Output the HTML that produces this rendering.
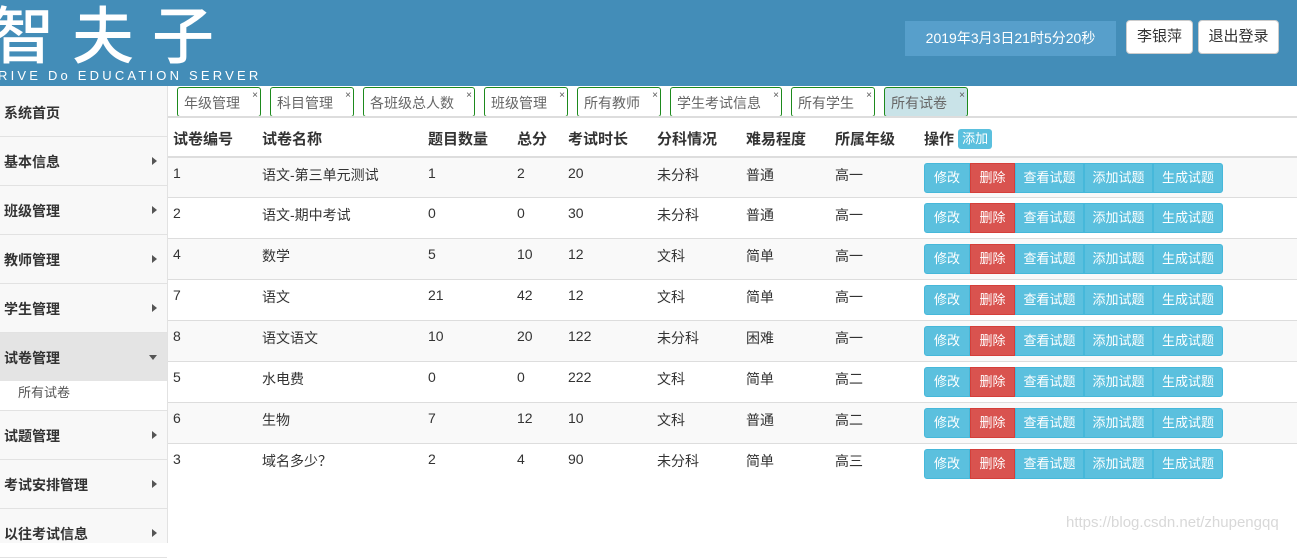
<!DOCTYPE html>
<html><head><meta charset="utf-8"><style>
*{margin:0;padding:0;box-sizing:border-box}
body{width:1297px;height:541px;overflow:hidden;background:#fff;font-family:"Liberation Sans","Noto Sans CJK SC",sans-serif;color:#333;font-size:14px;position:relative}
.hd{position:absolute;left:0;top:0;width:1297px;height:86px;background:#438db8}
.logo{position:absolute;left:-8px;top:-14px;color:#fff;font-size:62px;letter-spacing:18px;font-weight:500;font-family:"Noto Sans CJK SC",sans-serif}
.sub{position:absolute;left:-2px;top:68px;color:#fff;font-size:13px;letter-spacing:3.2px}
.date{position:absolute;left:905px;top:21px;width:211px;height:35px;background:#579fcb;color:#fff;font-size:14px;line-height:35px;text-align:center}
.btn{position:absolute;top:20px;height:34px;background:#fff;border:1px solid #ccc;border-radius:4px;font-size:15px;line-height:32px;text-align:center}
.side{position:absolute;left:0;top:88px;width:168px;height:455px;background:#f8f8f8;border-right:1px solid #e2e2e2}
.sidebg{position:absolute;left:0;top:86px;width:168px;height:3px;background:#f8f8f8;border-right:1px solid #e2e2e2}
.it{height:49px;border-bottom:1px solid #e2e2e2;font-weight:bold;font-size:14px;padding-left:4px;line-height:50px;position:relative;color:#333}
.it i{position:absolute;right:10px;top:20px;width:0;height:0;border-left:5px solid #555;border-top:4px solid transparent;border-bottom:4px solid transparent}
.it.act{background:#e4e4e4;border-bottom:none;height:48px}
.it.act i{border-top:5px solid #555;border-left:4px solid transparent;border-right:4px solid transparent;border-bottom:none;top:22px}
.subi{height:30px;background:#fff;padding-left:18px;font-size:13px;line-height:24px;color:#555;border-bottom:1px solid #e2e2e2}
.tab{position:absolute;top:87px;height:30px;border:1px solid #1d8a1d;border-radius:3px;font-size:14px;color:#666;padding-left:6px;line-height:30px}
.tab b{position:absolute;right:2px;top:-7px;font-size:10px;color:#555;font-weight:normal}
.sep{position:absolute;left:168px;top:116px;width:1129px;height:2px;background:#ddd}
.th{position:absolute;top:118px;height:37px;font-weight:bold;font-size:15px;line-height:44px}
.row{position:absolute;left:168px;width:1129px;height:41px;border-top:1px solid #ddd}
.row span{position:absolute;top:7px;font-size:14px}
.bg{position:absolute;left:756px;top:5px;height:30px;display:flex}
.bg div{height:30px;background:#5bc0de;border:1px solid #46b8da;color:#fff;font-size:13px;line-height:28px;text-align:center}
.bg .d{background:#d9534f;border-color:#d43f3a}
</style></head><body>
<div class="hd">
<div class="logo">智夫子</div>
<div class="sub">RIVE Do EDUCATION SERVER</div>
<div class="date">2019年3月3日21时5分20秒</div>
<div class="btn" style="left:1126px;width:67px">李银萍</div>
<div class="btn" style="left:1198px;width:81px">退出登录</div>
</div>
<div class="sidebg"></div>
<div class="side">
<div class="it">系统首页</div>
<div class="it">基本信息<i></i></div>
<div class="it">班级管理<i></i></div>
<div class="it">教师管理<i></i></div>
<div class="it">学生管理<i></i></div>
<div class="it act">试卷管理<i></i></div>
<div class="subi">所有试卷</div>
<div class="it">试题管理<i></i></div>
<div class="it">考试安排管理<i></i></div>
<div class="it">以往考试信息<i></i></div>
</div>
<div class="tab" style="left:177px;width:84px">年级管理<b>×</b></div>
<div class="tab" style="left:270px;width:84px">科目管理<b>×</b></div>
<div class="tab" style="left:363px;width:112px">各班级总人数<b>×</b></div>
<div class="tab" style="left:484px;width:84px">班级管理<b>×</b></div>
<div class="tab" style="left:577px;width:84px">所有教师<b>×</b></div>
<div class="tab" style="left:670px;width:112px">学生考试信息<b>×</b></div>
<div class="tab" style="left:791px;width:84px">所有学生<b>×</b></div>
<div class="tab" style="left:884px;width:84px;background:#c9e3e8">所有试卷<b>×</b></div>
<div class="sep"></div>
<div class="th" style="left:173px">试卷编号</div>
<div class="th" style="left:262px">试卷名称</div>
<div class="th" style="left:428px">题目数量</div>
<div class="th" style="left:517px">总分</div>
<div class="th" style="left:568px">考试时长</div>
<div class="th" style="left:657px">分科情况</div>
<div class="th" style="left:746px">难易程度</div>
<div class="th" style="left:835px">所属年级</div>
<div class="th" style="left:924px">操作 <span style="display:inline-block;background:#5bc0de;color:#fff;font-weight:normal;font-size:13px;line-height:20px;padding:0 4px;border-radius:3px;vertical-align:1px">添加</span></div>
<div id="rows"></div>
<script>
var d=[["1","语文-第三单元测试","1","2","20","未分科","普通","高一"],["2","语文-期中考试","0","0","30","未分科","普通","高一"],["4","数学","5","10","12","文科","简单","高一"],["7","语文","21","42","12","文科","简单","高一"],["8","语文语文","10","20","122","未分科","困难","高一"],["5","水电费","0","0","222","文科","简单","高二"],["6","生物","7","12","10","文科","普通","高二"],["3","域名多少？","2","4","90","未分科","简单","高三"]];
var xs=[5,94,260,349,400,489,578,667],h="";
d.forEach(function(r,i){h+='<div class="row" style="top:'+(156+i*41)+'px;'+(i==0?'border-top:2px solid #ddd;':'')+(i%2==0?'background:#f9f9f9;':'')+'">';
r.forEach(function(c,j){h+='<span style="left:'+xs[j]+'px">'+c+'</span>'});
h+='<div class="bg"><div style="width:46px;border-radius:3px 0 0 3px">修改</div><div class="d" style="width:45px">删除</div><div style="width:69px">查看试题</div><div style="width:69px">添加试题</div><div style="width:70px;border-radius:0 3px 3px 0">生成试题</div></div></div>'});
document.getElementById("rows").innerHTML=h;
</script>
<div style="position:absolute;left:1066px;top:514px;color:#d8d8d8;font-size:15px">https://blog.csdn.net/zhupengqq</div>
</body></html>
